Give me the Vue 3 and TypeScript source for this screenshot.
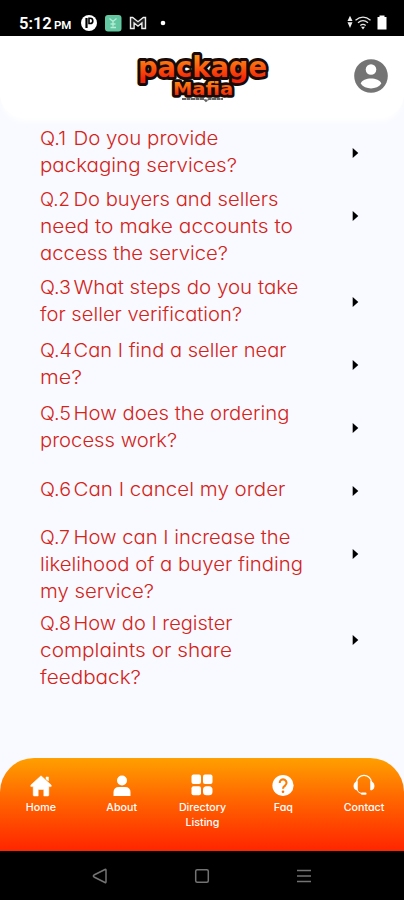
<script setup lang="ts">
interface Line { text: string; width: number }
interface Question { no: string; noWidth: number; first: Line; rest: Line[] }

const questions: Question[] = [
  { no: 'Q.1', noWidth: 26, first: { text: 'Do you provide', width: 145 }, rest: [{ text: 'packaging services?', width: 197 }] },
  { no: 'Q.2', noWidth: 30, first: { text: 'Do buyers and sellers', width: 205 }, rest: [{ text: 'need to make accounts to', width: 253 }, { text: 'access the service?', width: 188 }] },
  { no: 'Q.3', noWidth: 31, first: { text: 'What steps do you take', width: 225 }, rest: [{ text: 'for seller verification?', width: 202 }] },
  { no: 'Q.4', noWidth: 32, first: { text: 'Can I find a seller near', width: 213 }, rest: [{ text: 'me?', width: 42 }] },
  { no: 'Q.5', noWidth: 31, first: { text: 'How does the ordering', width: 216 }, rest: [{ text: 'process work?', width: 137 }] },
  { no: 'Q.6', noWidth: 31, first: { text: 'Can I cancel my order', width: 212 }, rest: [] },
  { no: 'Q.7', noWidth: 30, first: { text: 'How can I increase the', width: 217 }, rest: [{ text: 'likelihood of a buyer finding', width: 263 }, { text: 'my service?', width: 114 }] },
  { no: 'Q.8', noWidth: 31, first: { text: 'How do I register', width: 159 }, rest: [{ text: 'complaints or share', width: 192 }, { text: 'feedback?', width: 101 }] },
]
</script>

<template>
  <div class="screen">
    <div class="status">
      <span class="time">5:12 <small>PM</small></span>
      <svg class="notifications" width="90" height="20" viewBox="0 0 90 20">
        <circle cx="9" cy="10" r="8" fill="#fff" />
        <path d="M6.500 5v10" fill="none" stroke="#000" stroke-width="2.200" />
        <path d="M9 5.300h1.200a2.600 2.600 0 0 1 0 5.200H9z" fill="#fff" stroke="#000" stroke-width="1.600" />
        <rect x="25" y="2" width="16.500" height="16.500" rx="3" fill="#63c7a2" />
        <path d="M29.500 5.500l3.500 3 3.500-3M33 8.500v5M30.500 11h5M30.500 14.500h5.500" fill="none" stroke="#b4eed8" stroke-width="1.300" />
        <path d="M50.500 15.500v-11h2.200l5.300 4.200 5.300-4.200h2.200v11h-3.600V10L58 13.200 54.100 10v5.500z" fill="#222" stroke="#eee" stroke-width="1.400" />
        <circle cx="83" cy="10" r="2.300" fill="#fff" />
      </svg>
      <svg class="signals" width="44" height="18" viewBox="0 0 44 18">
        <path d="M5 1.800l2.500 5.200h-5zM2.500 8.200h5L5 14z" fill="#eee" />
        <path d="M10.500 6.200q7.500-6.200 15 0M13 8.800q5-4.200 10 0M15.300 11.500q2.700-2.300 5.400 0" fill="none" stroke="#e6e6e6" stroke-width="1.300" />
        <path d="M16 12.700h4L18 15.500z" fill="#eee" />
        <path d="M32.500 3h2V1.600h5V3h2v12.500h-9z" fill="#fff" />
      </svg>
    </div>

    <header class="header">
      <svg class="logo" width="140" height="56" viewBox="0 0 140 56">
        <defs>
          <linearGradient id="fire" x1="0" y1="0" x2="0" y2="1">
            <stop offset="0.2" stop-color="#ff8a12" />
            <stop offset="0.85" stop-color="#f52408" />
          </linearGradient>
        </defs>
        <g class="logo-text" fill="url(#fire)" stroke="#160b07" stroke-linejoin="round" paint-order="stroke">
          <text x="6" y="27.500" font-size="28.500" stroke-width="6" textLength="129" lengthAdjust="spacingAndGlyphs">package</text>
          <text x="41" y="45.500" font-size="18.500" stroke-width="5.500" textLength="60" lengthAdjust="spacingAndGlyphs">Mafia</text>
        </g>
        <path d="M50 50h22l2 2 3-2h14" fill="none" stroke="#666" stroke-width="1.800" stroke-dasharray="4 .5" />
      </svg>
      <svg class="avatar" width="34" height="34" viewBox="0 0 34 34">
        <circle cx="17" cy="17" r="16.800" fill="#747474" />
        <circle cx="17" cy="10.500" r="5.300" fill="#fff" />
        <path d="M6.700 24.500C9 17.800 25 17.800 27.300 24.500 23 31 11 31 6.700 24.500z" fill="#fff" />
      </svg>
    </header>

    <main class="faq">
      <div v-for="q in questions" :key="q.no" class="row" :class="{ tall: q.rest.length === 2 }">
        <div class="question">
          <div class="line">
            <svg class="number" width="34" height="27"><text x="0" y="18" :textLength="q.noWidth" lengthAdjust="spacingAndGlyphs">{{ q.no }}</text></svg>
            <svg :width="q.first.width + 4" height="27"><text x="-1.500" y="18" :textLength="q.first.width" lengthAdjust="spacingAndGlyphs">{{ q.first.text }}</text></svg>
          </div>
          <div v-for="l in q.rest" :key="l.text" class="line">
            <svg :width="l.width + 4" height="27"><text x="0" y="18" :textLength="l.width" lengthAdjust="spacingAndGlyphs">{{ l.text }}</text></svg>
          </div>
        </div>
        <svg class="arrow" width="7" height="12" viewBox="0 0 7 12"><path d="M.7 1L6.300 6 .7 11z" fill="#000" /></svg>
      </div>
    </main>

    <nav class="tabs">
      <div class="tab">
        <svg width="24" height="24" viewBox="0 0 24 24" fill="#fff"><path d="M12 1.800L22.200 11v1.600h-2.400V21q0 1-1 1h-4v-6.500h-5.600V22h-4q-1 0-1-1v-8.400H1.800V11zM17 3h2.500v4L17 5z" stroke="#fff" stroke-width=".5" stroke-linejoin="round" /></svg>
        <span>Home</span>
      </div>
      <div class="tab">
        <svg width="24" height="24" viewBox="0 0 24 24" fill="#fff"><circle cx="12" cy="6.500" r="5" /><path d="M3.500 22v-3.500q0-5.500 5.500-5.500h6q5.500 0 5.500 5.500V22z" /></svg>
        <span>About</span>
      </div>
      <div class="tab">
        <svg width="24" height="24" viewBox="0 0 24 24" fill="#fff"><rect x="1.500" y=".5" width="9.500" height="9.500" rx="2" /><rect x="13" y=".5" width="9.500" height="9.500" rx="2" /><rect x="1.500" y="12.200" width="9.500" height="9" rx="2" /><rect x="13" y="12.200" width="9.500" height="9" rx="3.500" /></svg>
        <span>Directory<br>Listing</span>
      </div>
      <div class="tab">
        <svg width="24" height="24" viewBox="0 0 24 24"><circle cx="12" cy="11.500" r="10.600" fill="#fff" /><path d="M8.700 8.900a3.400 3.400 0 1 1 5.500 2.600Q12 12.900 12 14.700" fill="none" stroke="#ff7c00" stroke-width="2.100" /><circle cx="12" cy="17.700" r="1.300" fill="#ff7000" /></svg>
        <span>Faq</span>
      </div>
      <div class="tab">
        <svg width="24" height="24" viewBox="0 0 24 24" fill="none" stroke="#fff"><path d="M4.500 8.500C5-1 19-1 19.500 8.500" stroke-width="1.300" /><path d="M5.500 7.500v8.500H4.500Q1.800 15.500 1.800 12T4.500 7.500zM18.500 7.500v8.500h1q2.700-.5 2.700-4T19.500 7.500z" fill="#fff" stroke-width=".5" /><path d="M5 15.500q1 3.500 4.500 4" stroke-width="1" /><path d="M10 19.700h3.500" stroke-width="2.200" stroke-linecap="round" /></svg>
        <span>Contact</span>
      </div>
    </nav>

    <div class="system">
      <svg width="16" height="16" viewBox="0 0 16 16"><path d="M13 1.500q1-.5 1 .7v11.600q0 1.200-1 .7L2 9Q.7 8 2 7z" /></svg>
      <svg width="16" height="16" viewBox="0 0 16 16"><rect x="1.700" y="1.700" width="12.600" height="12.600" rx="1.500" /></svg>
      <svg width="16" height="16" viewBox="0 0 16 16"><path d="M1 2.500h14M1 8h14M1 13.500h14" /></svg>
    </div>
  </div>
</template>

<style>
body { margin: 0; background: #f9faff; }
</style>

<style scoped>
.screen {
  display: flex;
  flex-direction: column;
  width: 404px;
  height: 900px;
  overflow: hidden;
  background: #f9faff;
  font-family: Inter, "Liberation Sans", sans-serif;
  font-feature-settings: "cv11";
}
svg { display: block; flex: none; }
.status {
  display: flex;
  align-items: center;
  box-sizing: border-box;
  height: 36px;
  padding: 10px 15px 0 19px;
  background: #000;
  color: #fff;
}
.time { width: 60.500px; font: 600 16.500px Roboto, sans-serif; white-space: nowrap; }
.time small { font-size: 11.500px; margin-left: -2px; }
.signals { margin-left: auto; }
.header {
  display: flex;
  align-items: flex-start;
  box-sizing: border-box;
  height: 82px;
  padding: 13px 16px 0 132px;
  background: #fff;
  border-radius: 0 0 24px 24px;
  box-shadow: 0 5px 5px -1px #fffc;
}
.logo { overflow: visible; }
.logo-text { font-family: "DejaVu Sans", sans-serif; font-weight: 700; }
.avatar { margin: 10px 0 0 auto; }
.faq { flex: 1; padding: 4px 45px 0 39.500px; }
.row { display: flex; justify-content: space-between; min-height: 63px; }
.row.tall { min-height: 86px; }
.question { display: flex; flex-direction: column; justify-content: center; }
.line { display: flex; height: 27px; }
.line svg { overflow: visible; }
.number { margin-right: 1px; }
.line text { fill: #d32419; font-size: 18.500px; font-weight: 350; }
.arrow { margin-top: 25px; }
.tabs {
  display: grid;
  grid-template-columns: repeat(5, 80.800px);
  box-sizing: border-box;
  height: 93px;
  padding: 16px 0 0 .5px;
  border-radius: 34px 34px 0 0;
  background: linear-gradient(#ffa000, #ff6500 45%, #ff2500);
}
.tab {
  display: flex;
  flex-direction: column;
  align-items: center;
  color: #fff;
  font-size: 10.700px;
  font-weight: 500;
  line-height: 15px;
  text-align: center;
}
.tab span { margin-top: 2px; }
.system {
  display: flex;
  justify-content: center;
  gap: 86px;
  box-sizing: border-box;
  height: 49px;
  padding-top: 17px;
  background: #000;
}
.system svg { fill: none; stroke: #737373; stroke-width: 1.500; }
</style>
